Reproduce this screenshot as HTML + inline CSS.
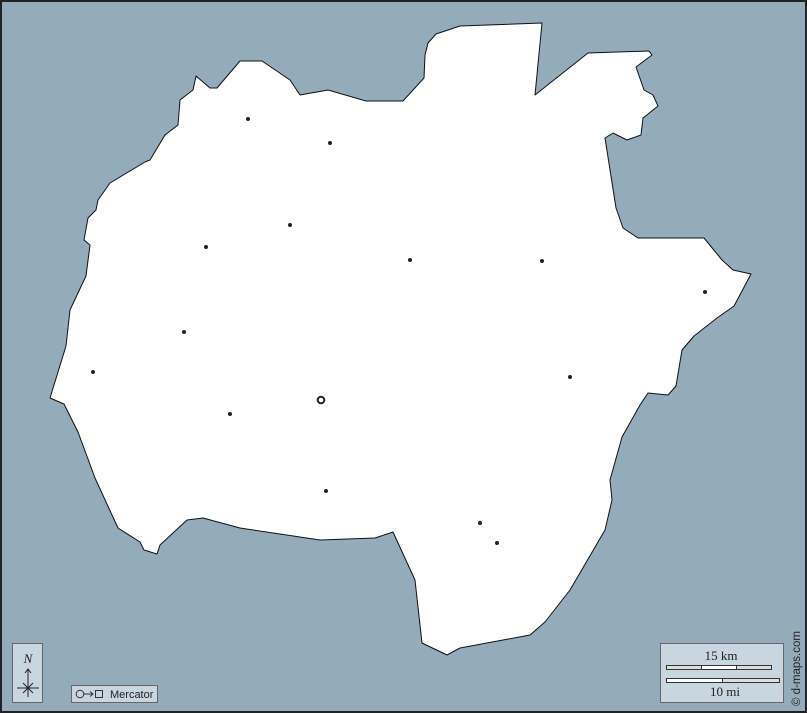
<!DOCTYPE html>
<html><head><style>
html,body{margin:0;padding:0;background:#94abbb;}
</style></head><body>
<svg width="807" height="713" viewBox="0 0 807 713" xmlns="http://www.w3.org/2000/svg" style="display:block">
<rect x="0" y="0" width="807" height="713" fill="#94abbb"/>
<polygon fill="#fff" stroke="#111" stroke-width="1" stroke-linejoin="round" points="50,398 64,404 78,432 95,478 118,528 140,542 144,550 157,554 160,545 187,520 203,518 240,528 320,540 375,538 393,532 415,580 422,643 447,655 460,648 530,635 545,622 570,590 605,530 612,500 610,480 622,437 640,405 648,393 668,395 676,386 682,350 694,336 717,318 734,306 751,274 733,270 722,260 704,238 638,238 623,228 616,208 605,138 613,133 627,140 641,135 643,118 658,106 653,95 644,90 636,67 652,55 649,51 588,53 535,95 542,23 460,26 436,34 428,43 425,55 424,78 403,101 366,101 328,90 300,95 290,80 262,61 240,61 217,88 210,88 196,76 193,90 180,100 178,125 165,135 150,160 145,162 110,183 98,200 96,210 88,218 84,240 90,245 86,276 70,310 66,346 50,398"/>
<g fill="#222">
<circle cx="248" cy="119" r="2"/><circle cx="330" cy="143" r="2"/><circle cx="290" cy="225" r="2"/>
<circle cx="206" cy="247" r="2"/><circle cx="410" cy="260" r="2"/><circle cx="542" cy="261" r="2"/>
<circle cx="705" cy="292" r="2"/><circle cx="184" cy="332" r="2"/><circle cx="93" cy="372" r="2"/>
<circle cx="570" cy="377" r="2"/><circle cx="230" cy="414" r="2"/><circle cx="326" cy="491" r="2"/>
<circle cx="480" cy="523" r="2"/><circle cx="497" cy="543" r="2"/>
</g>
<circle cx="321" cy="400" r="3.3" fill="none" stroke="#222" stroke-width="2"/>
<!-- compass -->
<rect x="12.5" y="643.5" width="30" height="59" fill="#c8d6df" stroke="#666"/>
<text x="28" y="663" font-family="Liberation Serif, serif" font-style="italic" font-size="13" text-anchor="middle" fill="#222">N</text>
<g stroke="#222" stroke-width="1" fill="none">
<line x1="28" y1="669" x2="28" y2="697"/><path d="M25,673 L28,669 L31,673"/>
<line x1="17" y1="688" x2="39" y2="688"/><line x1="23" y1="683" x2="33" y2="693"/><line x1="33" y1="683" x2="23" y2="693"/>
</g>
<!-- mercator -->
<rect x="71.5" y="685.5" width="86" height="17" fill="#c8d6df" stroke="#666"/>
<g stroke="#333" stroke-width="1" fill="none">
<circle cx="80" cy="694" r="3.8"/>
<line x1="84" y1="694" x2="93" y2="694"/><path d="M90,691.5 L93,694 L90,696.5"/>
<rect x="95.5" y="690.5" width="7" height="7"/>
</g>
<text x="110" y="698" font-family="Liberation Sans, DejaVu Sans, sans-serif" font-size="11" fill="#222">Mercator</text>
<!-- scale -->
<rect x="660.5" y="643.5" width="123" height="59" fill="#c8d6df" stroke="#666"/>
<text x="721" y="660" font-family="Liberation Serif, serif" font-size="13" text-anchor="middle" fill="#222">15 km</text>
<rect x="666.5" y="665.5" width="105" height="4" fill="#ddd" stroke="#333"/>
<rect x="701.5" y="665.5" width="35" height="4" fill="#fff" stroke="#333"/>
<rect x="666.5" y="678.5" width="113" height="4" fill="#ddd" stroke="#333"/>
<rect x="666.5" y="678.5" width="56" height="4" fill="#fff" stroke="#333"/>
<text x="725" y="696" font-family="Liberation Serif, serif" font-size="13" text-anchor="middle" fill="#222">10 mi</text>
<text transform="translate(800,706) rotate(-90)" font-family="Liberation Sans, sans-serif" font-size="11.5" fill="#222">© d-maps.com</text>
<rect x="1" y="1" width="805" height="711" fill="none" stroke="#222" stroke-width="2"/>
</svg>
</body></html>
